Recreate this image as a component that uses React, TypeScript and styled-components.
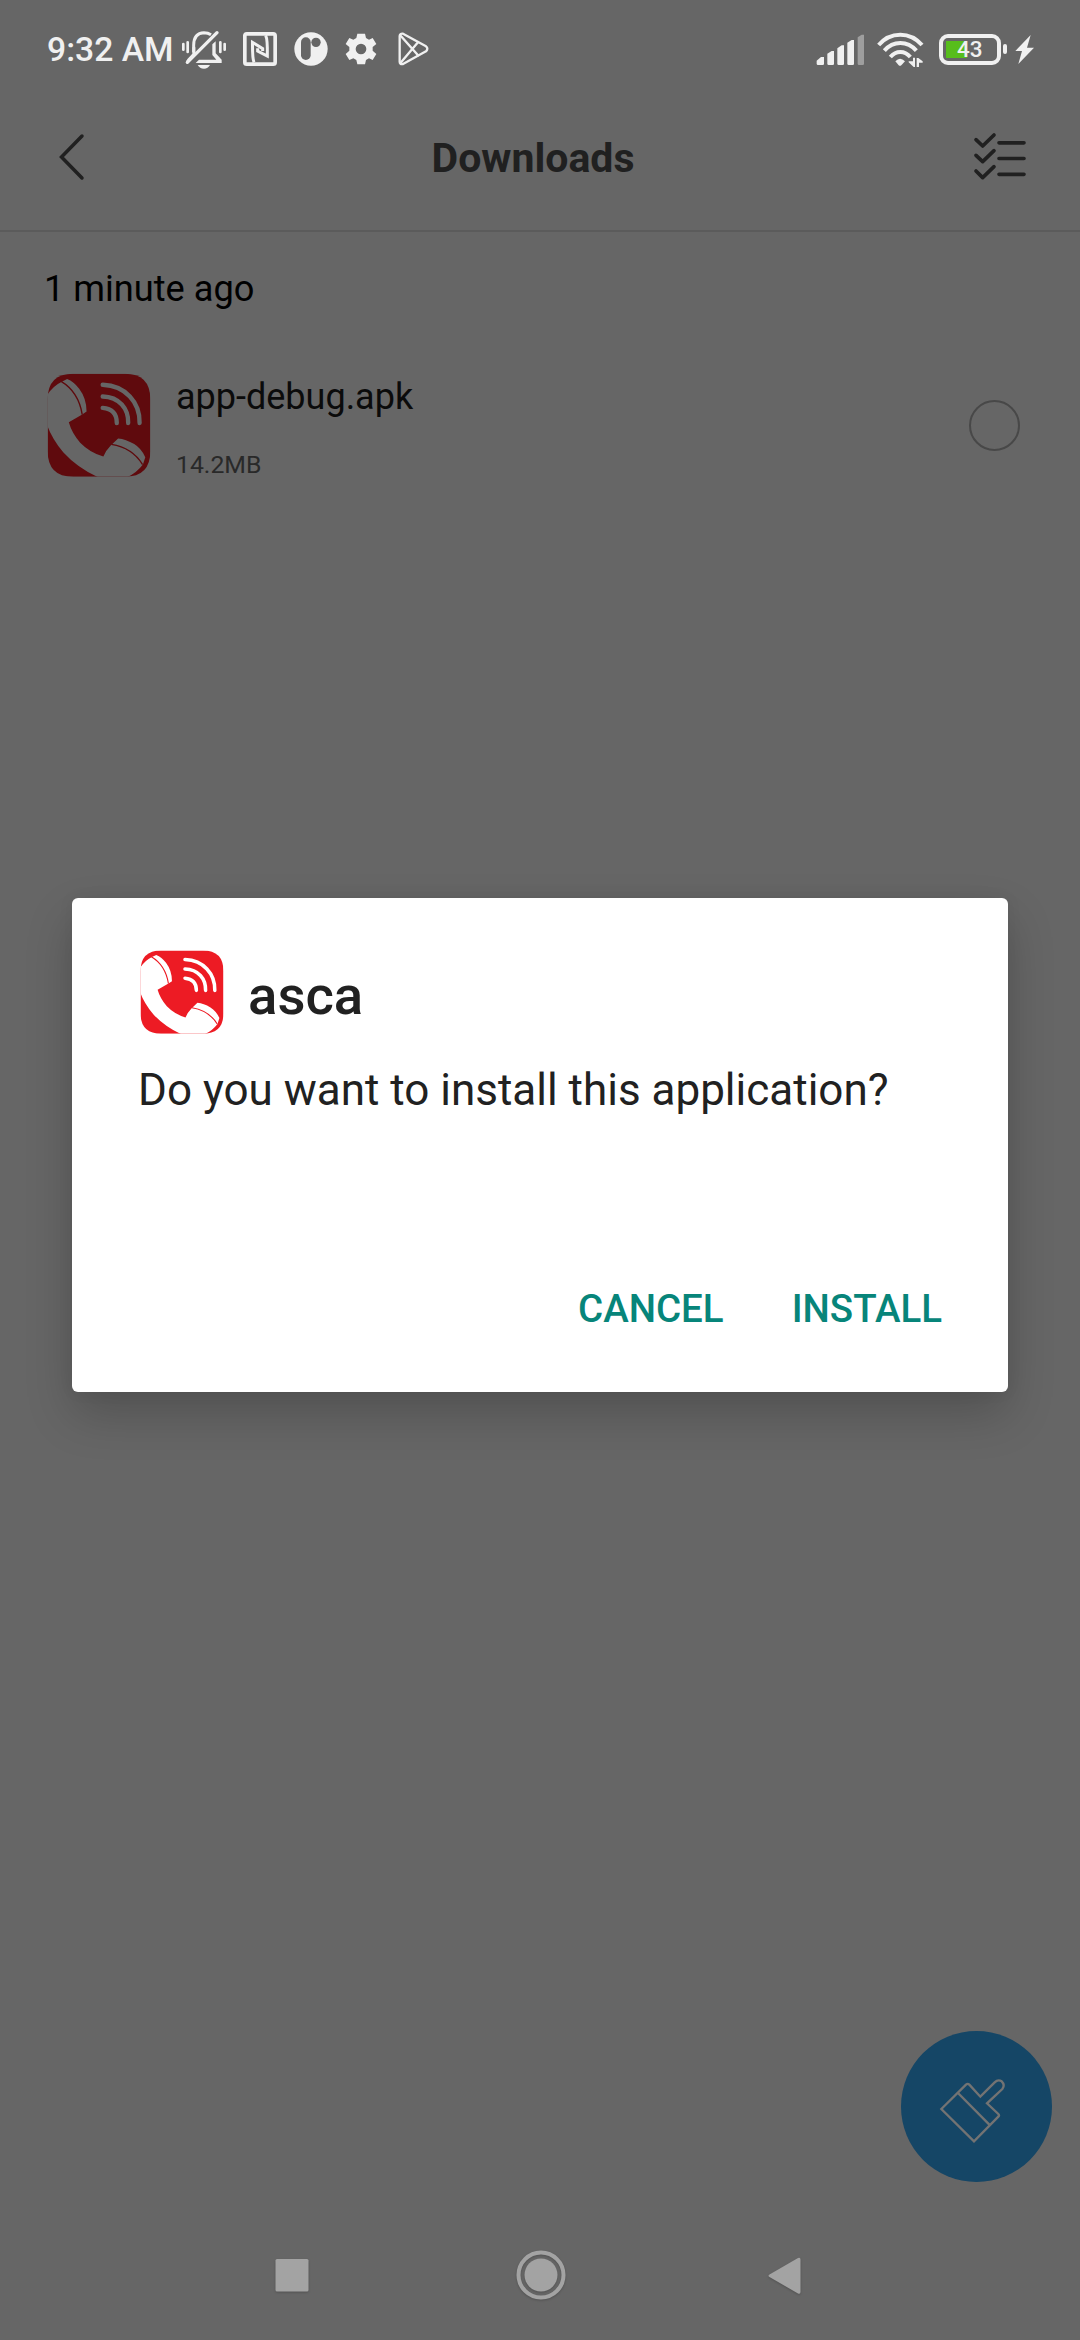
import React from "react";
import styled, { createGlobalStyle } from "styled-components";

const GlobalStyle = createGlobalStyle`
  html, body { margin: 0; padding: 0; background: #666666; }
  * { box-sizing: border-box; }
`;

const Screen = styled.div`
  position: relative;
  display: flex;
  flex-direction: column;
  width: 1080px;
  height: 2340px;
  overflow: hidden;
  background: #666666;
  font-family: Roboto, "Noto Sans", sans-serif;
`;

const StatusBar = styled.header`
  display: flex;
  align-items: center;
  height: 100px;
  padding: 0 46px 0 47px;
  color: #f0f0f0;
`;

const Clock = styled.span`
  width: 133px;
  font-size: 33.7px;
  font-weight: 500;
  line-height: 40px;
  white-space: nowrap;
`;

const StatusIcon = styled.svg<{ $gap?: number }>`
  flex: none;
  display: block;
  margin-left: ${(p) => p.$gap ?? 0}px;
`;

const StatusRight = styled.div`
  display: flex;
  align-items: center;
  margin-left: auto;
`;

const BatteryCell = styled.div`
  display: flex;
  align-items: center;
  margin: -2px 0 0 14.5px;
`;

const BatteryCase = styled.div`
  display: flex;
  align-items: center;
  justify-content: center;
  width: 62.5px;
  height: 31px;
  border: 4px solid #f0f0f0;
  border-radius: 9px;
  background: linear-gradient(#57bd1c, #57bd1c) 3px 3px / 21px 17px no-repeat;
  font-size: 22.5px;
  line-height: 23px;
  font-weight: 500;
`;

const BatteryTip = styled.div`
  width: 4px;
  height: 10px;
  margin-left: 2px;
  border-radius: 2px;
  background: #f0f0f0;
`;

const TitleBar = styled.div`
  display: grid;
  grid-template-columns: 120px 1fr 120px;
  align-items: center;
  height: 132px;
  padding-bottom: 17px;
  border-bottom: 2px solid #5b5b5b;
  color: #202020;
`;

const Title = styled.h1`
  margin: 2px 0 0;
  padding-right: 14px;
  text-align: center;
  font-size: 41px;
  font-weight: 700;
  line-height: 48px;
`;

const GroupLabel = styled.div`
  margin-top: 33px;
  padding-left: 44px;
  font-size: 36.2px;
  line-height: 48px;
  color: #000;
`;

const FileRow = styled.div`
  display: flex;
  align-items: center;
  margin-top: 60px;
  padding: 0 60px 0 47px;
  height: 104px;
`;

const FileInfo = styled.div`
  display: flex;
  flex-direction: column;
  justify-content: space-between;
  flex: 1;
  height: 104px;
  margin-left: 25px;
`;

const FileName = styled.span`
  font-size: 36px;
  line-height: 48px;
  color: #0b0b0b;
`;

const FileSize = styled.span`
  font-size: 24.8px;
  line-height: 24px;
  color: #292929;
`;

const Radio = styled.div`
  width: 51px;
  height: 51px;
  border: 2px solid #484848;
  border-radius: 50%;
`;

const Dialog = styled.section`
  position: absolute;
  left: 72px;
  top: 898px;
  width: 936px;
  height: 494px;
  display: flex;
  flex-direction: column;
  padding: 52px 66px 59px;
  border-radius: 6px;
  background: #fff;
  box-shadow: 0 22px 48px rgba(0, 0, 0, 0.2), 0 0 16px rgba(0, 0, 0, 0.06);
  color: #212121;
`;

const DialogHead = styled.div`
  display: flex;
  align-items: center;
  height: 84px;
  padding-left: 2px;
`;

const AppName = styled.h2`
  margin: 6px 0 0 24px;
  font-size: 54.5px;
  font-weight: 500;
  line-height: 64px;
`;

const Message = styled.p`
  margin: 29px 0 0;
  font-size: 44px;
  line-height: 54px;
  white-space: nowrap;
`;

const Actions = styled.div`
  display: flex;
  justify-content: flex-end;
  gap: 68px;
  margin-top: auto;
`;

const Action = styled.button`
  padding: 0;
  border: 0;
  background: none;
  font: 500 38.5px/48px Roboto, sans-serif;
  color: #07857a;
`;

const CleanButton = styled.button`
  position: absolute;
  left: 901px;
  top: 2031px;
  width: 151px;
  height: 151px;
  padding: 0;
  border: 0;
  border-radius: 50%;
  background: #154666;
`;

const NavBar = styled.nav`
  display: flex;
  align-items: center;
  justify-content: space-between;
  height: 130px;
  margin-top: auto;
  padding: 0 277px 0 273px;
`;

const NavIcon = styled.svg<{ $shift?: number }>`
  display: block;
  margin-left: ${(p) => p.$shift ?? 0}px;
  filter: drop-shadow(0 1px 1px rgba(0, 0, 0, 0.2));
`;

const IconArt = styled.svg`
  display: block;
  flex: none;
`;

interface AppIconProps {
  size: number;
  red: string;
  light: string;
  id: string;
}

function AppIcon({ size, red, light, id }: AppIconProps) {
  return (
    <IconArt width={size} height={size} viewBox="52 69 310 310">
      <clipPath id={id}>
        <path d="M130 71H284Q360 71 360 147V302Q360 378 284 378H130Q54 378 54 302V147Q54 71 130 71Z" />
      </clipPath>
      <g clipPath={`url(#${id})`}>
        <rect x="52" y="69" width="310" height="310" fill={red} />
        <path
          fill={light}
          d="M50 138Q69 108 96 95L112 87Q132 95 148 116Q170 145 170 184L157 193L117 216Q126 248 151 277Q180 307 220 318Q227 300 242 285L264 264Q287 266 312 281Q333 294 345 320L338 342Q318 368 290 380H205Q143 352 101 306Q65 263 50 218Z"
        />
        <g fill="none" stroke={red} strokeWidth="4">
          <path d="M94 94Q146 125 157 193" />
          <path d="M244 282Q306 292 337 342" />
        </g>
        <g fill="none" stroke={light} strokeWidth="13" strokeLinecap="round">
          <path d="M218 104Q269 106 299 139Q329 171 328 218" />
          <path d="M218 139Q254 140 275 163Q295 185 294 218" />
          <path d="M218 173Q260 176 260 218" />
        </g>
      </g>
    </IconArt>
  );
}

function NotificationIcons() {
  return (
    <>
      <StatusIcon width="48" height="42" viewBox="450 57 144 126">
        <g fill="none" stroke="#f0f0f0" strokeLinecap="round">
          <path strokeWidth="8" d="M460 102V119M473 97V126M571 97V126M584 102V119" />
          <path strokeWidth="9" d="M491 127V106Q491 69 522 68Q534 68 543 74" strokeLinecap="butt" />
          <path strokeWidth="10" d="M472 157L561 68" />
        </g>
        <path fill="#f0f0f0" d="M487 112H496V133L480 149L469 159Q467 151 473 146L487 131ZM547 103L557 94V130L575 149V159H497L507 149H559L547 135ZM503 165H540Q534 176 522 176Q509 176 503 165Z" />
      </StatusIcon>
      <StatusIcon $gap={14} width="36" height="42" viewBox="636 57 108 126">
        <g fill="none" stroke="#f0f0f0">
          <rect x="644.5" y="71.5" width="91" height="91" rx="6" strokeWidth="11" />
          <path strokeWidth="9" d="M672 157Q667 146 667.500 97L698 116V123" />
          <path strokeWidth="9" d="M707 76Q713 88 712 138L683 123V115" />
        </g>
      </StatusIcon>
      <StatusIcon $gap={15.3} width="36" height="42" viewBox="789 57 108 126">
        <circle cx="843" cy="117" r="50" fill="#f0f0f0" />
        <rect x="813" y="82" width="29" height="68" rx="14.5" fill="#666" />
        <circle cx="858" cy="97" r="14" fill="#666" />
      </StatusIcon>
      <StatusIcon $gap={14.7} width="34" height="42" viewBox="942 57 102 126">
        <path
          fill="#f0f0f0"
          fillRule="evenodd"
          d="M982 71H1005L1008 84L1017 89L1028 84L1039 102L1028 111V122L1039 132L1028 150L1017 145L1008 150L1005 163H982L979 150L970 145L958 150L947 132L958 122V111L947 102L958 84L970 89L979 84ZM993 101A16 16 0 1 0 993 133A16 16 0 1 0 993 101Z"
        />
      </StatusIcon>
      <StatusIcon $gap={18} width="36" height="42" viewBox="1098 57 108 126">
        <g fill="none" stroke="#f0f0f0" strokeLinejoin="round" strokeLinecap="round">
          <path strokeWidth="7" d="M1109 78Q1109 70 1119 71L1188 109Q1196 116 1188 124L1119 162Q1109 164 1109 155Z" />
          <path strokeWidth="7" d="M1112 77L1164 136M1112 158L1164 97" />
        </g>
      </StatusIcon>
    </>
  );
}

function SignalIcons() {
  return (
    <>
      <StatusIcon width="49" height="42" viewBox="77 57 147 126">
        <g fill="#f0f0f0">
          <path d="M79 152L92 141H101V161Q101 165 97 165H83Q79 165 79 161Z" />
          <path d="M111 131L124 123H131V161Q131 165 127 165H115Q111 165 111 161Z" />
          <path d="M141 115L154 106H161V161Q161 165 157 165H145Q141 165 141 161Z" />
          <path d="M171 98L184 90H191V161Q191 165 187 165H175Q171 165 171 161Z" />
        </g>
        <path fill="#9e9e9e" d="M202 82L214 74H221V161Q221 165 217 165H206Q202 165 202 161Z" />
      </StatusIcon>
      <StatusIcon $gap={11} width="48" height="42" viewBox="257 57 144 126">
        <g fill="none" stroke="#f0f0f0" strokeWidth="12">
          <path d="M265 105Q291 74 330 74Q368 74 395 105" />
          <path d="M282 122Q302 99 330 99Q358 99 378 122" />
          <path d="M300 141Q313 126 330 126Q347 126 360 141" />
        </g>
        <path fill="#f0f0f0" d="M315 154Q329 139 344 154L333 166Q329 169 325 166Z" />
        <path fill="#f0f0f0" d="M368 143H374V171H370L355 157V154H368ZM379 171V144H384L397 154V158H386V171Z" />
      </StatusIcon>
      <BatteryCell>
        <BatteryCase>43</BatteryCase>
        <BatteryTip />
      </BatteryCell>
      <StatusIcon $gap={8} width="19" height="42" viewBox="672 57 57 126">
        <path fill="#f0f0f0" d="M719 75L673 123H693L682 162L729 113H708Z" />
      </StatusIcon>
    </>
  );
}

export default function App() {
  return (
    <Screen>
      <GlobalStyle />
      <StatusBar>
        <Clock>9:32 AM</Clock>
        <NotificationIcons />
        <StatusRight>
          <SignalIcons />
        </StatusRight>
      </StatusBar>

      <TitleBar>
        <IconArt width="120" height="60" viewBox="0 0 120 60">
          <path d="M82 9L61.500 30L82 51" fill="none" stroke="#202020" strokeWidth="3.500" strokeLinecap="round" />
        </IconArt>
        <Title>Downloads</Title>
        <IconArt width="120" height="60" viewBox="60 50 360 180">
          <g fill="none" stroke="#202020" strokeWidth="11" strokeLinecap="round" strokeLinejoin="round">
            <path d="M108 88L128 107L162 74M108 135L128 154L162 121M108 182L128 202L162 169" />
            <path d="M177 97.500H252M177 144.500H252M177 192H252" />
          </g>
        </IconArt>
      </TitleBar>

      <GroupLabel>1 minute ago</GroupLabel>
      <FileRow>
        <AppIcon size={104} red="#5f0a0d" light="#666666" id="file-icon" />
        <FileInfo>
          <FileName>app-debug.apk</FileName>
          <FileSize>14.2MB</FileSize>
        </FileInfo>
        <Radio />
      </FileRow>

      <NavBar>
        <NavIcon width="38" height="50" viewBox="0 0 38 50">
          <rect x="2.500" y="9" width="33" height="32.500" rx="1.500" fill="#a3a3a3" />
        </NavIcon>
        <NavIcon $shift={5} width="54" height="54" viewBox="0 0 54 54">
          <circle cx="27" cy="27" r="22.500" fill="none" stroke="#a3a3a3" strokeWidth="4" />
          <circle cx="27" cy="27" r="16.500" fill="#a3a3a3" />
        </NavIcon>
        <NavIcon width="38" height="50" viewBox="0 0 38 50">
          <path d="M4.500 24.500Q2.500 25.500 4.500 27L33 43.500Q35.500 44.500 35.500 42V9.500Q35.500 7 33 8Z" fill="#a3a3a3" />
        </NavIcon>
      </NavBar>

      <CleanButton aria-label="Clean">
        <IconArt width="151" height="151" viewBox="63 93 453 453">
          <g fill="none" stroke="#737373" strokeWidth="7" strokeLinejoin="miter">
            <path d="M184 327L258 254Q263 249 268 254L301 290L344 247Q354 237 365 244Q376 255 367 267L321 310L355 342Q359 346 355 350L282 424Z" />
            <path d="M234 279L328 374" />
          </g>
        </IconArt>
      </CleanButton>

      <Dialog role="dialog">
        <DialogHead>
          <AppIcon size={84} red="#ed1b24" light="#ffffff" id="dialog-icon" />
          <AppName>asca</AppName>
        </DialogHead>
        <Message>Do you want to install this application?</Message>
        <Actions>
          <Action>CANCEL</Action>
          <Action>INSTALL</Action>
        </Actions>
      </Dialog>
    </Screen>
  );
}
